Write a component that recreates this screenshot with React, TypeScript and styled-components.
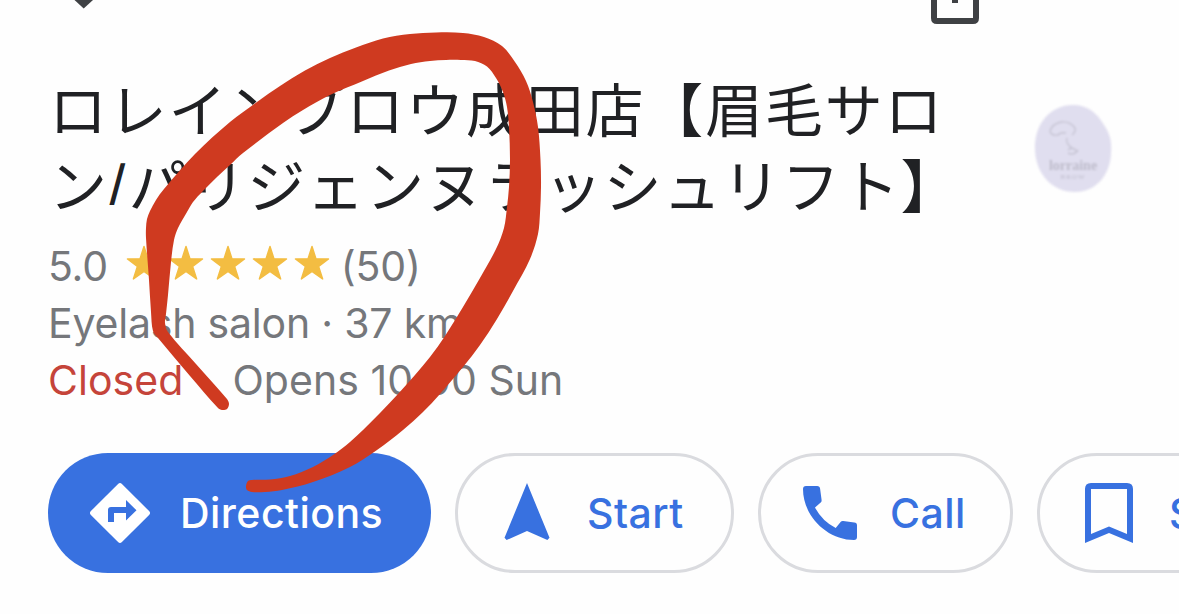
import React from 'react';
import styled, { createGlobalStyle } from 'styled-components';

type Point = [number, number];

// Outline of the hand-drawn loop, clockwise from its lower left tip
const loopOutline: Point[] = [
    [218, 408], [190, 376], [158, 338], [153, 331], [151, 312], [149, 280], [146, 238],
    [146, 228], [147, 219], [150, 211], [156, 200], [164, 189], [195, 154], [230, 122], [257, 102],
    [280, 86], [305, 70.5], [330, 58], [356, 47.5], [383, 38.5], [410, 34], [436, 32.5],
    [463, 33], [484, 37], [502, 46], [515, 62], [526, 81], [533, 102], [538, 127],
    [540.5, 160], [541, 187], [540, 213], [538, 234], [530, 259], [513, 291], [497, 319],
    [480, 345], [463, 367], [440, 394], [423, 412], [403, 430], [377, 450], [350, 467],
    [313, 482], [282, 490], [265, 492], [252, 492], [247, 490], [246, 486], [248, 481],
    [252, 480], [270, 479.5], [290, 476], [313, 467], [333, 455], [350, 442], [363, 430],
    [380, 413], [398, 394], [415, 375], [430, 357], [445, 336], [463, 307], [480, 278],
    [496, 249], [504, 228], [507, 207], [509, 187], [510, 160], [509, 127],
    [507, 107], [503, 92], [496, 78], [487, 66.5], [475, 61], [461, 60], [446, 60], [430, 61],
    [411, 64], [389, 70.500], [363, 81], [330, 95], [303, 110], [283, 123], [243, 153],
    [230, 165], [217, 177], [203, 191], [193, 202], [187, 212], [178, 228], [174, 240],
    [171, 262], [168, 295], [166, 314], [165, 323], [168, 332], [196, 364], [227, 399],
    [229, 404], [227, 409], [222, 410],
];

// Catmull-Rom spline through the points, as cubic segments
const smoothPath = (pts: Point[]) => {
    const n = pts.length;
    const at = (i: number) => pts[(i + n) % n];
    let d = `M${pts[0][0]} ${pts[0][1]}`;
    for (let i = 0; i < n; i++) {
        const [p0, p1, p2, p3] = [at(i - 1), at(i), at(i + 1), at(i + 2)];
        // shorter handles where a long segment meets a short one
        const len = (a: Point, b: Point) => Math.hypot(a[0] - b[0], a[1] - b[1]);
        const seg = len(p1, p2);
        const k1 = seg / (3 * (len(p0, p1) + seg));
        const k2 = seg / (3 * (len(p2, p3) + seg));
        d += `C${p1[0] + (p2[0] - p0[0]) * k1} ${p1[1] + (p2[1] - p0[1]) * k1}`;
        d += ` ${p2[0] - (p3[0] - p1[0]) * k2} ${p2[1] - (p3[1] - p1[1]) * k2}`;
        d += ` ${p2[0]} ${p2[1]}`;
    }
    return d + 'Z';
};

const DirectionsIcon = () => (
    <Icon viewBox="0 0 24 24">
        <path
            fillRule="evenodd"
            d="M11.35 2.3a.92.92 0 0 1 1.3 0l9.05 9.05a.92.92 0 0 1 0 1.3l-9.05 9.05a.92.92 0 0 1-1.3 0L2.3 12.65a.92.92 0 0 1 0-1.3zM14 7.7V10H9a1 1 0 0 0-1 1v4h2v-3h4v2.5l3.5-3.4z"
        />
    </Icon>
);

const StartIcon = () => (
    <Icon viewBox="0 0 24 24">
        <path d="M12 2 4.5 20.29l.71.71L12 18l6.79 3 .71-.71z" />
    </Icon>
);

const CallIcon = () => (
    <Icon viewBox="0 0 24 24">
        <path d="M4 3h3.7q.9 0 1 .9l.5 3.8q.05.5-.3.8L7 10.2q2.4 4.5 6.9 6.8l1.7-2.05q.3-.35.8-.25l3.7.45q.9.1.9.9V20q0 1-1 1C11 21 3 13 3 4q0-1 1-1z" />
    </Icon>
);

const SaveIcon = () => (
    <Icon viewBox="0 0 24 24">
        <path fillRule="evenodd" d="M6 2h12q2 0 2 2v18l-8-3.35L4 22V4q0-2 2-2zM6 4v15l6-2.5 6 2.5V4z" />
    </Icon>
);

const App: React.FC = () => {
    return (
        <Page>
            <GlobalStyle />
            <TopBar>
                <svg width="20" height="9" viewBox="0 0 20 9">
                    <path d="M.5 0h18.5L9.7 8.5z" fill="#3f4144" />
                </svg>
                <svg width="48" height="24" viewBox="0 0 48 24">
                    <path d="M3 -6V18q0 3 3 3h36q3 0 3-3V-6" fill="none" stroke="#3f4144" strokeWidth="6" />
                    <path d="M21 0h6v3h-6z" fill="#3f4144" />
                </svg>
            </TopBar>

            <Header>
                <Title>
                    <TitleLine $spacing={1.8}>ロレインブロウ成田店【眉毛サロ</TitleLine>
                    <TitleLine $spacing={1.4}>
                        ン<Slash>/</Slash>パリジェンヌラッシュリフト】
                    </TitleLine>
                </Title>
                <Avatar viewBox="0 0 80 90">
                    <path
                        d="M39 1C54 1 63 9 70 21C76 30 78 37 77 50C76 71 62 88 41 88C18 88 2 70 1 46C0 20 16 1 39 1Z"
                        fill="#e0deef"
                    />
                    <g fill="none" stroke="#c6c4d3" strokeWidth="1.4">
                        <path d="M16 27q2-7 11-9 9-1 14 6 1 4-3 7M16 27q1 5 8 4 2-3 8-2M33 34q-2 5 5 10" />
                        <path d="M34 46q4-4 9 1M34 49q6 3 10-3" />
                    </g>
                    <AvatarName x="39" y="66">lorraine</AvatarName>
                    <AvatarSub x="39" y="75">BROW</AvatarSub>
                </Avatar>
            </Header>

            <Info>
                <InfoRow $spacing={-0.2}>
                    <span>5.0</span>
                    <Stars>
                        {[0, 1, 2, 3, 4].map((i) => (
                            <svg key={i} width="36" height="36" viewBox="0 0 36 36">
                                <path
                                    d="M18 1.5l3.9 12.2 12.6.2-9.9 7.6 4 12.4L18 26.5 7.4 33.9l4-12.4-9.9-7.6 12.6-.2z"
                                    fill="#f3bd42"
                                    stroke="#f3bd42"
                                    strokeWidth="1.5"
                                    strokeLinejoin="round"
                                />
                            </svg>
                        ))}
                    </Stars>
                    <span>(50)</span>
                </InfoRow>
                <InfoRow $spacing={-0.2}>Eyelash salon · 37 km</InfoRow>
                <InfoRow $spacing={0.05}>
                    <Closed>Closed</Closed>
                    <Dot>·</Dot>
                    <span>Opens 10:00 Sun</span>
                </InfoRow>
            </Info>

            <Actions>
                <ActionButton $width={383} $primary>
                    <DirectionsIcon />
                    Directions
                </ActionButton>
                <ActionButton $width={279}>
                    <StartIcon />
                    Start
                </ActionButton>
                <ActionButton $width={255}>
                    <CallIcon />
                    Call
                </ActionButton>
                <ActionButton $width={270}>
                    <SaveIcon />
                    Save
                </ActionButton>
            </Actions>

            <Scribble viewBox="0 0 1179 614">
                <path d={smoothPath(loopOutline)} fill="#cf3a20" />
            </Scribble>
        </Page>
    );
};

// Styled Components
const GlobalStyle = createGlobalStyle`
  body {
    margin: 0;
    background: #fefefe;
  }
`;

const Page = styled.div`
  position: relative;
  width: 1179px;
  height: 614px;
  overflow: hidden;
  box-sizing: border-box;
  padding-left: 48px;
  background: #fefefe;
  font-family: Inter, 'Noto Sans CJK JP', sans-serif;
`;

const TopBar = styled.div`
  display: flex;
  justify-content: space-between;
  align-items: flex-start;
  height: 69px;
  padding: 0 200px 0 26px;
`;

const Header = styled.header`
  display: flex;
  justify-content: space-between;
  height: 168px;
  padding-right: 65px;
`;

const Title = styled.h1`
  margin: 0;
  padding-left: 1px;
  color: #202124;
  font-family: 'Noto Sans CJK JP', sans-serif;
  font-size: 58px;
  font-weight: 400;
`;

const TitleLine = styled.div<{ $spacing: number }>`
  height: 76px;
  line-height: 76px;
  letter-spacing: ${({ $spacing }) => $spacing}px;
  white-space: nowrap;
`;

const Slash = styled.span`
  display: inline-block;
  height: 76px;
  width: 20px;
  font-family: Inter, sans-serif;
  font-size: 48px;
  font-weight: 500;
  vertical-align: top;
`;

const Avatar = styled.svg`
  width: 80px;
  height: 90px;
  margin-top: 35px;
  filter: blur(0.9px);
`;

const AvatarName = styled.text`
  fill: #bebccb;
  font-family: 'Liberation Serif', serif;
  font-size: 14px;
  font-weight: 700;
  text-anchor: middle;
`;

const AvatarSub = styled.text`
  fill: #bebccb;
  font-family: 'Liberation Serif', serif;
  font-size: 7px;
  letter-spacing: 1px;
  text-anchor: middle;
`;

const Info = styled.div`
  color: #75777b;
  font-size: 41px;
`;

const InfoRow = styled.div<{ $spacing: number }>`
  display: flex;
  align-items: center;
  height: 57px;
  letter-spacing: ${({ $spacing }) => $spacing}px;
  white-space: nowrap;
`;

const Stars = styled.div`
  display: flex;
  gap: 6px;
  margin: 0 11px 5px 18px;
`;

const Closed = styled.span`
  color: #c5443a;
`;

const Dot = styled.span`
  width: 30px;
  padding: 0 12px 0 7px;
  text-align: center;
`;

const Actions = styled.div`
  display: flex;
  gap: 24px;
  margin-top: 45px;
`;

const ActionButton = styled.button<{ $width: number; $primary?: boolean }>`
  display: flex;
  flex: none;
  align-items: center;
  gap: 24px;
  width: ${({ $width }) => $width}px;
  height: 120px;
  padding: 0 0 0 ${({ $primary }) => ($primary ? 36 : 33)}px;
  border: ${({ $primary }) => ($primary ? 'none' : '3px solid #dadbdf')};
  border-radius: 60px;
  background: ${({ $primary }) => ($primary ? '#3871e0' : '#fefefe')};
  color: ${({ $primary }) => ($primary ? '#ffffff' : '#3871e0')};
  font-family: inherit;
  font-size: 41px;
  font-weight: 500;
  letter-spacing: 0.45px;
  cursor: pointer;
`;

const Icon = styled.svg`
  flex: none;
  width: 72px;
  height: 72px;
  fill: currentColor;
`;

// Drawn over everything else on the page
const Scribble = styled.svg`
  position: absolute;
  top: 0;
  left: 0;
  width: 1179px;
  height: 614px;
  pointer-events: none;
`;

export default App;
